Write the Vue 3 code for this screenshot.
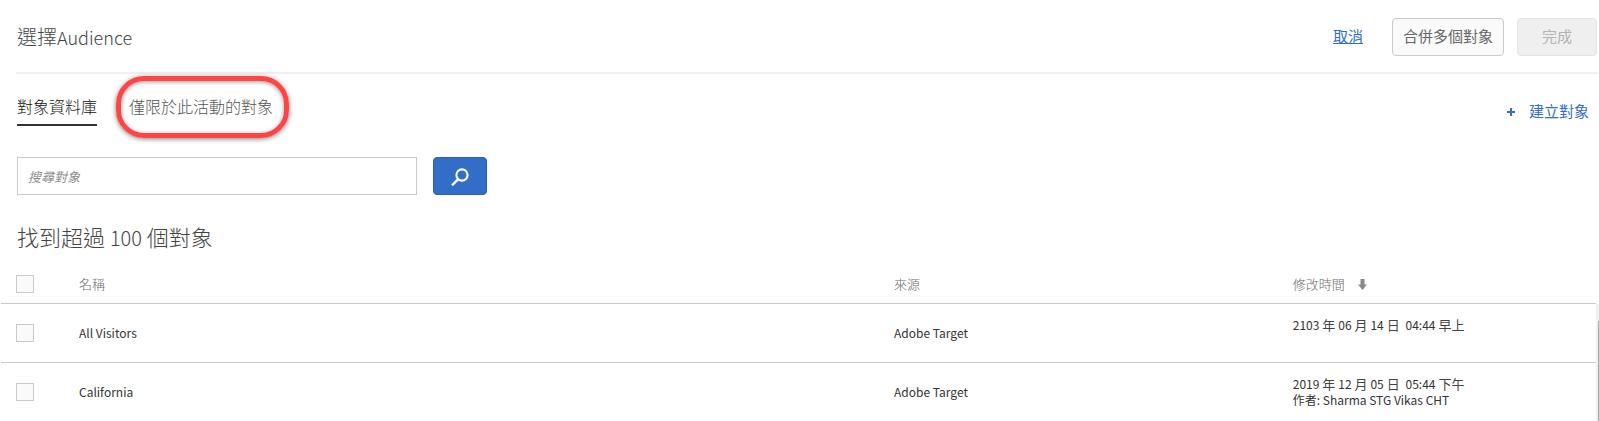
<script setup>
import { ref } from 'vue'

const query = ref('')
const selected = ref([])
const rows = [
  { name: 'All Visitors', source: 'Adobe Target', modified: '2103 年 06 月 14 日\u00a0 04:44 早上', author: '' },
  { name: 'California', source: 'Adobe Target', modified: '2019 年 12 月 05 日\u00a0 05:44 下午', author: '作者: Sharma STG Vikas CHT' },
]

// Digits are set slightly smaller than the ideographs around them.
const parts = (text) => text.split(/([\d:]+)/).filter(Boolean)
const isNumber = (text) => /^\d/.test(text)
</script>

<template>
  <main class="dialog">
    <header class="top">
      <h1>選擇<span>Audience</span></h1>
      <div class="actions">
        <a class="cancel" href="#">取消</a>
        <button class="btn" type="button">合併多個對象</button>
        <button class="btn done" type="button" disabled>完成</button>
      </div>
    </header>

    <div class="bar">
      <nav class="tabs">
        <a class="tab active" href="#">對象資料庫</a>
        <a class="tab marked" href="#">僅限於此活動的對象</a>
      </nav>
      <button class="create" type="button">
        <svg width="8" height="8" viewBox="0 0 8 8" aria-hidden="true"><path d="M4 0v8M0 4h8" stroke="currentColor" stroke-width="2" /></svg>
        <span>建立對象</span>
      </button>
    </div>

    <form class="search" @submit.prevent>
      <input v-model="query" type="text" placeholder="搜尋對象" aria-label="搜尋對象" />
      <button type="submit" aria-label="搜尋">
        <svg width="18" height="18" viewBox="0 0 18 18" aria-hidden="true">
          <circle cx="11" cy="7" r="5.6" fill="none" stroke="#fff" stroke-width="2.1" />
          <path d="M7.2 11.2L1 17.3" stroke="#fff" stroke-width="2.5" />
        </svg>
      </button>
    </form>

    <h2>找到超過 <span>100</span> 個對象</h2>

    <div class="results">
      <table>
        <colgroup>
          <col class="c-check" />
          <col class="c-name" />
          <col class="c-source" />
          <col />
        </colgroup>
        <thead>
          <tr>
            <th><input type="checkbox" aria-label="全選" /></th>
            <th>名稱</th>
            <th>來源</th>
            <th>
              <span class="sort">修改時間
                <svg width="9" height="11" viewBox="0 0 9 11" aria-hidden="true"><path d="M2.5 0h4v5.500H9L4.5 11 0 5.5h2.500z" fill="#8a8a8a" /></svg>
              </span>
            </th>
          </tr>
        </thead>
        <tbody>
          <tr v-for="row in rows" :key="row.name">
            <td><input v-model="selected" type="checkbox" :value="row.name" :aria-label="row.name" /></td>
            <td class="latin">{{ row.name }}</td>
            <td class="latin">{{ row.source }}</td>
            <td class="modified">
              <div class="line"><span v-for="(part, i) in parts(row.modified)" :key="i" :class="{ latin: isNumber(part) }">{{ part }}</span></div>
              <div v-if="row.author" class="line latin">{{ row.author }}</div>
            </td>
          </tr>
        </tbody>
      </table>
      <div class="track"><div class="thumb"></div></div>
    </div>
  </main>
</template>

<style>
body {
  margin: 0;
  background: #fff;
}
</style>

<style scoped>
* {
  box-sizing: border-box;
}
.dialog {
  font-family: "Noto Sans CJK TC", "Noto Sans", sans-serif;
  font-size: 13px;
  line-height: 16px;
  color: #444;
}
button,
input {
  font: inherit;
  margin: 0;
}
.top {
  display: flex;
  align-items: center;
  justify-content: space-between;
  height: 74px;
  margin: 0 1px 0 16px;
  padding: 2px 1px 0;
  border-bottom: 2px solid #f0f0f0;
}
h1 {
  margin: 0;
  font-size: 20px;
  line-height: 28px;
  font-weight: 300;
}
h1 span {
  font-size: 18px;
}
.actions {
  display: flex;
  align-items: center;
}
.cancel {
  margin-right: 29px;
  padding-bottom: 2px;
  font-size: 15px;
  line-height: 20px;
  color: #326ec8;
  text-decoration: underline;
}
.btn {
  height: 38px;
  min-width: 80px;
  padding: 0 10px 2px;
  border: 1px solid #cacaca;
  border-radius: 4px;
  background: #fafafa;
  color: #666;
  font-size: 15px;
  line-height: 20px;
}
.done {
  margin-left: 13px;
  border-color: #e4e4e4;
  background: #efefef;
  color: #b3b3b3;
}
.bar {
  display: flex;
  align-items: flex-start;
  justify-content: space-between;
  height: 83px;
  padding: 22px 10px 0 17px;
}
.tabs {
  display: flex;
  gap: 32px;
}
.tab {
  position: relative;
  height: 30px;
  font-size: 16px;
  line-height: 20px;
  font-weight: 300;
  color: #555;
  text-decoration: none;
}
.active {
  color: #111;
  border-bottom: 2px solid #323232;
}
.marked::after {
  content: "";
  position: absolute;
  inset: -20px -16px -12px -13px;
  border: 5px solid #fd4545;
  border-radius: 28px;
  box-shadow: 0 1px 5px rgba(0, 0, 0, 0.5), inset 0 1px 4px rgba(0, 0, 0, 0.4);
}
.create {
  display: flex;
  align-items: center;
  gap: 14px;
  padding: 0;
  margin-top: 5px;
  border: 0;
  background: none;
  color: #326ec8;
  font-size: 15px;
  line-height: 20px;
}
.create svg {
  margin-top: 2px;
}
.search {
  display: flex;
  gap: 16px;
  padding-left: 17px;
}
.search input {
  width: 400px;
  height: 38px;
  padding: 0 10px;
  border: 1px solid #cacaca;
  background: #fff;
  color: #4b4b4b;
}
.search input::placeholder {
  color: #8e8e8e;
  font-style: italic;
  opacity: 1;
}
.search button {
  display: flex;
  align-items: center;
  justify-content: center;
  width: 54px;
  height: 38px;
  padding: 2px 0 0;
  border: 1px solid #2562bc;
  border-radius: 4px;
  background: #326ec8;
}
h2 {
  height: 30px;
  margin: 26px 0 0 17px;
  font-size: 22px;
  line-height: 30px;
  font-weight: 300;
}
h2 span {
  font-size: 20px;
}
.results {
  display: flex;
  padding: 15px 0 0 1px;
}
table {
  flex: 1;
  table-layout: fixed;
  border-collapse: separate;
  border-spacing: 0;
}
.c-check {
  width: 78px;
}
.c-name {
  width: 51.1%;
}
.c-source {
  width: 25%;
}
th,
td {
  padding: 0;
  text-align: left;
  vertical-align: middle;
}
th {
  height: 38px;
  padding-bottom: 1px;
  border-bottom: 1px solid #cacaca;
  font-weight: 300;
  color: #6e6e6e;
}
td {
  height: 59px;
  border-bottom: 1px solid #cacaca;
}
tr:last-child td {
  height: 58px;
  border-bottom: 0;
}
th:first-child {
  padding: 0 0 1px 15px;
}
td:first-child {
  padding-left: 15px;
}
.latin {
  font-size: 12px;
  color: #333;
}
.modified {
  padding-top: 13px;
  vertical-align: top;
}
.line {
  height: 16px;
  white-space: pre;
}
.sort {
  display: flex;
  align-items: center;
  gap: 13px;
}
input[type="checkbox"] {
  display: block;
  appearance: none;
  width: 18px;
  height: 18px;
  border: 1px solid #cacaca;
  background: #fafafa;
}
input[type="checkbox"]:checked {
  background: #326ec8;
}
.track {
  width: 3px;
  margin-top: 38px;
  padding: 17px 0 0 2px;
  background: #f0f0f0;
}
.thumb {
  height: 100%;
  background: #a8a8a8;
}
</style>
